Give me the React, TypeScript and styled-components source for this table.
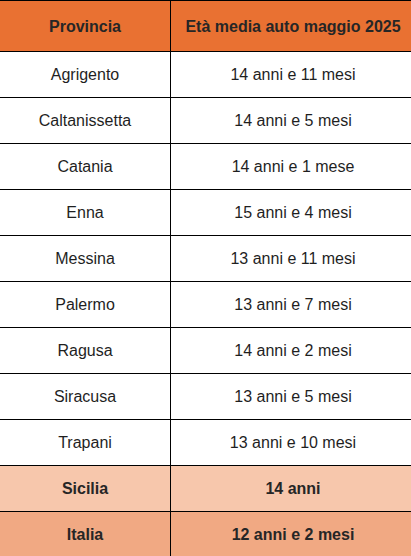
import { FC } from 'react';
import styled, { createGlobalStyle } from 'styled-components';

const GlobalStyle = createGlobalStyle`
  html, body {
    margin: 0;
    padding: 0;
    background: #ffffff;
    overflow: hidden;
  }
  body {
    font-family: "Liberation Sans", Arial, sans-serif;
  }
`;

type RowKind = 'normal' | 'region' | 'country';

const rowColors: Record<RowKind, string> = {
  normal: '#ffffff',
  region: '#f7c7ac',
  country: '#f1a983',
};

const Table = styled.table`
  border-collapse: collapse;
  table-layout: fixed;
  width: 416px;
  margin-left: -1px;
  color: #1f1f1f;
  font-size: 16px;
`;

const HeadCell = styled.th`
  background: #e97132;
  border: 1px solid #000;
  height: 48px;
  padding: 2px 4px 0;
  font-weight: 700;
  text-align: center;
  vertical-align: middle;
  color: #262626;
`;

const Row = styled.tr<{ $kind: RowKind }>`
  background: ${(p) => rowColors[p.$kind]};
  font-weight: ${(p) => (p.$kind === 'normal' ? 400 : 700)};
  color: ${(p) => (p.$kind === 'normal' ? '#1f1f1f' : '#262626')};
`;

const Cell = styled.td`
  border: 1px solid #000;
  height: 44px;
  padding: 1px 4px 0;
  text-align: center;
  vertical-align: middle;
`;

const rows: { name: string; age: string; kind: RowKind }[] = [
  { name: 'Agrigento', age: '14 anni e 11 mesi', kind: 'normal' },
  { name: 'Caltanissetta', age: '14 anni e 5 mesi', kind: 'normal' },
  { name: 'Catania', age: '14 anni e 1 mese', kind: 'normal' },
  { name: 'Enna', age: '15 anni e 4 mesi', kind: 'normal' },
  { name: 'Messina', age: '13 anni e 11 mesi', kind: 'normal' },
  { name: 'Palermo', age: '13 anni e 7 mesi', kind: 'normal' },
  { name: 'Ragusa', age: '14 anni e 2 mesi', kind: 'normal' },
  { name: 'Siracusa', age: '13 anni e 5 mesi', kind: 'normal' },
  { name: 'Trapani', age: '13 anni e 10 mesi', kind: 'normal' },
  { name: 'Sicilia', age: '14 anni', kind: 'region' },
  { name: 'Italia', age: '12 anni e 2 mesi', kind: 'country' },
];

const App: FC = () => {
  return (
    <>
      <GlobalStyle />
      <Table>
        <colgroup>
          <col style={{ width: 171 }} />
          <col style={{ width: 245 }} />
        </colgroup>
        <thead>
          <tr>
            <HeadCell>Provincia</HeadCell>
            <HeadCell>Età media auto maggio 2025</HeadCell>
          </tr>
        </thead>
        <tbody>
          {rows.map((r) => (
            <Row key={r.name} $kind={r.kind}>
              <Cell>{r.name}</Cell>
              <Cell>{r.age}</Cell>
            </Row>
          ))}
        </tbody>
      </Table>
    </>
  );
};

export default App;
